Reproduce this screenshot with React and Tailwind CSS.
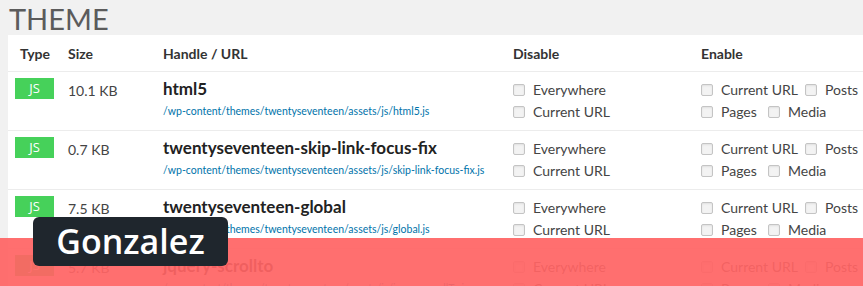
import React from 'react';

const rows = [
  { size: '10.1 KB', handle: 'html5', url: '/wp-content/themes/twentyseventeen/assets/js/html5.js' },
  { size: '0.7 KB', handle: 'twentyseventeen-skip-link-focus-fix', url: '/wp-content/themes/twentyseventeen/assets/js/skip-link-focus-fix.js' },
  { size: '7.5 KB', handle: 'twentyseventeen-global', url: '/wp-content/themes/twentyseventeen/assets/js/global.js' },
  { size: '5.7 KB', handle: 'jquery-scrollto', url: '/wp-content/themes/twentyseventeen/assets/js/jquery.scrollTo.js' },
];

function Box({ label, className = '' }) {
  return (
    <span className={`flex items-center ${className}`}>
      <span className="h-[12px] w-[12px] rounded-[2px] border border-[#c4c4c4] bg-[#f3f3f3] shadow-[inset_0_1px_2px_rgba(0,0,0,0.08)]" />
      <span className="ml-[8px]">{label}</span>
    </span>
  );
}

function Row({ row }) {
  return (
    <div className="grid h-[59px] grid-cols-[53px_95px_350px_188px_1fr] border-b border-[#ececec] pl-[7px]">
      <div className="pt-[6px]">
        <span className="flex h-[21px] w-[39px] items-center justify-center bg-[#46d15a] font-['Open_Sans',sans-serif] text-[13px] text-white">JS</span>
      </div>
      <div className="pt-[8px] text-[14px] text-[#444]">{row.size}</div>
      <div className="pt-[6px]">
        <div className="text-[17px] font-bold leading-[22px] text-[#222]">{row.handle}</div>
        <div className="mt-[4px] text-[10.5px] leading-[14px] text-[#0073aa]">{row.url}</div>
      </div>
      <div className="flex flex-col gap-[4px] pt-[9px] text-[14px] leading-[18px] text-[#444]">
        <Box label="Everywhere" />
        <Box label="Current URL" />
      </div>
      <div className="flex flex-col gap-[4px] pt-[9px] text-[14px] leading-[18px] text-[#444]">
        <div className="flex">
          <Box label="Current URL" className="w-[104px]" />
          <Box label="Posts" />
        </div>
        <div className="flex">
          <Box label="Pages" className="w-[67px]" />
          <Box label="Media" />
        </div>
      </div>
    </div>
  );
}

export default function App() {
  return (
    <div className="relative h-[286px] w-[863px] overflow-hidden bg-[#f1f1f1] font-['Lato',sans-serif]">
      <h1 className="pl-[9px] pt-[2px] text-[29px] font-normal leading-[33px] text-[#5b5b5b]">THEME</h1>
      <div className="ml-[8px] bg-white">
        <div className="grid h-[37px] grid-cols-[53px_95px_350px_188px_1fr] items-center border-b border-[#ececec] pl-[7px] text-[14px] font-bold text-[#333]">
          <div className="pl-[5px]">Type</div>
          <div>Size</div>
          <div>Handle / URL</div>
          <div>Disable</div>
          <div>Enable</div>
        </div>
        {rows.map((row) => (
          <Row key={row.handle} row={row} />
        ))}
      </div>

      {/* red band + name tag */}
      <div className="absolute bottom-0 left-0 h-[48px] w-full bg-[#ff6464]/[0.93]" />
      <div className="absolute left-[33px] top-[217px] flex h-[49px] w-[195px] items-center justify-center rounded-[6px] bg-[#1f262d] font-['Open_Sans',sans-serif] text-[34px] font-semibold text-white">
        Gonzalez
      </div>
    </div>
  );
}
